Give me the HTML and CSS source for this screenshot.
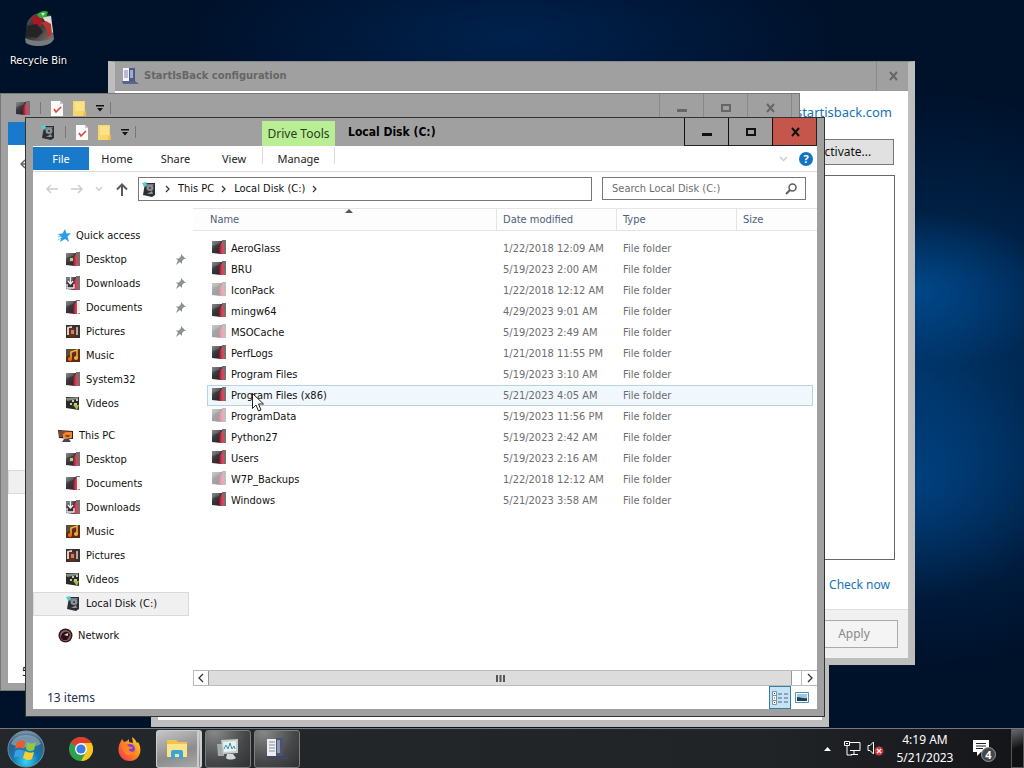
FILE: index.html
```html
<!DOCTYPE html>
<html lang="en">
<head>
<meta charset="utf-8">
<title>Local Disk (C:)</title>
<link rel="stylesheet" href="styles.css">
</head>
<body>
<svg class="defs" aria-hidden="true">
  <defs>
    <linearGradient id="gDark" x1="0" y1="0" x2="1" y2="1"><stop offset="0" stop-color="#8a8a8a"/><stop offset=".35" stop-color="#3a3a3e"/><stop offset="1" stop-color="#1b1b1f"/></linearGradient>
    <linearGradient id="gRed" x1="0" y1="0" x2="1" y2="0"><stop offset="0" stop-color="#8d1425"/><stop offset=".6" stop-color="#d8455a"/><stop offset="1" stop-color="#b05a66"/></linearGradient>
    <linearGradient id="gBin" x1="0" y1="0" x2="1" y2="1"><stop offset="0" stop-color="#6a6a6a"/><stop offset=".4" stop-color="#2a2a2a"/><stop offset="1" stop-color="#8a8a8a"/></linearGradient>
    <radialGradient id="gOrb" cx=".5" cy=".85" r=".9"><stop offset="0" stop-color="#35d6f5"/><stop offset=".4" stop-color="#1478b4"/><stop offset=".75" stop-color="#335e7c"/><stop offset="1" stop-color="#9db4c2"/></radialGradient>
    <linearGradient id="gFox" x1="1" y1="0" x2="0" y2="1"><stop offset="0" stop-color="#ffe23c"/><stop offset=".45" stop-color="#ff8a1e"/><stop offset="1" stop-color="#f02a5b"/></linearGradient>
    <symbol id="folder" viewBox="0 0 14 15">
      <path d="M0 1h13v13H9l-9-1z" fill="url(#gDark)"/>
      <path d="M10 0h4v14h-4z" fill="#77706f"/>
      <path d="M7 14V9c0-3 1-5 3-7l1 0c1 4 2 8 1 12z" fill="url(#gRed)"/>
      <path d="M0 1h9L7 4 0 6z" fill="#8a8a8a" opacity=".4"/>
    </symbol>
    <symbol id="f-desktop" viewBox="0 0 14 15"><use href="#folder" width="14" height="15"/><rect x="2" y="5" width="6" height="5" fill="#3c4a3a"/><rect x="4" y="6" width="3" height="3" fill="#c4c488"/></symbol>
    <symbol id="f-down" viewBox="0 0 14 15"><use href="#folder" width="14" height="15"/><path d="M4.500 1v6M2 5l2.500 3L7 5M1 8v4h7V8" fill="none" stroke="#e8f0f4" stroke-width="1.300"/></symbol>
    <symbol id="f-doc" viewBox="0 0 14 15"><use href="#folder" width="14" height="15"/><path d="M11 1h3v12l-3 1z" fill="#f0eeee"/></symbol>
    <symbol id="f-pic" viewBox="0 0 14 15"><rect y="1" width="14" height="13" fill="#3b302e"/><path d="M1 3l5-1v2H3v7H1z" fill="#d8d0c8"/><path d="M3 4h6v9H3z" fill="#6a2c1c"/><path d="M5 6h3v4H5z" fill="#c88458"/><path d="M10 3h2v8h-2z" fill="#afa8a4"/></symbol>
    <symbol id="f-music" viewBox="0 0 14 15"><rect y="1" width="14" height="13" fill="#5c2c18"/><path d="M0 1h14L0 9z" fill="#54503c"/><path d="M5 11V4l6-2v8" fill="none" stroke="#ffab2e" stroke-width="1.600"/><circle cx="4" cy="11" r="2" fill="#f06a1a"/><circle cx="10" cy="10" r="2" fill="#ffab2e"/></symbol>
    <symbol id="f-video" viewBox="0 0 14 15"><path d="M0 1h13v13L0 12z" fill="#2a2b26"/><path d="M0 2l12-1v2L1 5z" fill="#8b8b84"/><path d="M6 4h2v2H6zM10 3h2v2h-2zM4 7h2v2H4zM8 7h3v2H8z" fill="#c8c8b0"/><path d="M7 9h6l-2 5z" fill="#a2b94c"/></symbol>
    <symbol id="disk" viewBox="0 0 14 15"><path d="M3 1l10 0v12l-3 2-9-2z" fill="#2c3034"/><path d="M4 2l8 0-1 2-8 1z" fill="#70787c"/><ellipse cx="8" cy="6" rx="3.500" ry="3" fill="#8a9296"/><circle cx="8" cy="6" r="1" fill="#33383a"/><path d="M5 12l5-3 1 3z" fill="#8d9498"/><path d="M0 1l4-1 1 3-3 2z" fill="#53d0d4"/></symbol>
    <symbol id="pc" viewBox="0 0 16 14"><path d="M0 1l15 1v8L1 9z" fill="#2b1c18"/><path d="M1 2l8 0-3 6-5 0z" fill="#7b4a3c"/><path d="M5 5c3-3 6-2 9-2v6H5z" fill="#f0862a"/><path d="M7 6l5 0-1 2H8z" fill="#9e3c10"/><path d="M6 10h5l2 3H4z" fill="#4a4644"/></symbol>
    <symbol id="net" viewBox="0 0 15 15"><circle cx="7.500" cy="7.500" r="7" fill="#33191d"/><circle cx="7.500" cy="7.500" r="5.500" fill="#8a6268"/><path d="M3 10c0-5 3-7 7-6l2 3-3 5-4 0z" fill="#2a1014"/><path d="M6 7l4-2 0 3z" fill="#e6dcdc"/></symbol>
    <symbol id="star" viewBox="0 0 13 13"><path d="M7 0l1.500 4.500L13 4 9.500 7.500 11 13 7 10 2 13l1.500-5L0 5l4.500-.5z" fill="#2b9fe6"/><path d="M0 8l3-1M0 11l3-2" stroke="#7cc4ee"/></symbol>
    <symbol id="pin" viewBox="0 0 11 11"><path d="M6 0l5 5-2 0-2 2 0 3-2-2-4 3 2-4.500L1 4.500h3L6 2z" fill="#8b9094"/></symbol>
    <symbol id="check" viewBox="0 0 12 15"><path d="M0 0h9l3 3v12H0z" fill="#fdfafa"/><path d="M9 0l3 3H9z" fill="#c9c2c2"/><path d="M3 8l2 3 5-5" fill="none" stroke="#d8483c" stroke-width="1.600"/></symbol>
    <symbol id="newfolder" viewBox="0 0 13 15"><path d="M0 0h12v10l1 1v4H0z" fill="#f7d76c"/><path d="M2 1h9v9H2z" fill="#fbe18a"/><path d="M11 10h2v5h-3z" fill="#eebf48"/></symbol>
    <symbol id="drop" viewBox="0 0 8 7"><path d="M0 0h8v1.500H0zM1 3h6L4 6.500z" fill="#111"/></symbol>
    <symbol id="app" viewBox="0 0 17 17"><path d="M1 0h6v13H1z" fill="#f2f4fa"/><path d="M7 0h6v13H7z" fill="#4b5a88"/><path d="M8 2h3v8H8z" fill="#a2accb"/><path d="M2 3h4M2 5h4M2 7h4M2 9h4" stroke="#7a84a4"/><path d="M0 13h13l4 3H1z" fill="#5b6588"/></symbol>
    <symbol id="min" viewBox="0 0 12 12"><path d="M1 7h10v3H1z" fill="currentColor"/></symbol>
    <symbol id="max" viewBox="0 0 12 12"><path d="M2 3h8v6H2z" fill="none" stroke="currentColor" stroke-width="2"/></symbol>
    <symbol id="close" viewBox="0 0 12 12"><path d="M3 2l7 8M10 2l-7 8" fill="none" stroke="currentColor" stroke-width="2"/></symbol>
    <symbol id="chev" viewBox="0 0 6 8"><path d="M1 1l3 3-3 3" fill="none" stroke="currentColor" stroke-width="1.200"/></symbol>
    <symbol id="bigchev" viewBox="0 0 6 10"><path d="M1 1l4 4-4 4" fill="none" stroke="currentColor" stroke-width="1.300"/></symbol>
    <symbol id="down" viewBox="0 0 9 6"><path d="M1 1l3.500 3.500L8 1" fill="none" stroke="currentColor" stroke-width="1.500"/></symbol>
    <symbol id="arrow" viewBox="0 0 12 10"><path d="M12 5H1M5 1L1 5l4 4" fill="none" stroke="currentColor" stroke-width="1.500"/></symbol>
  </defs>
</svg>

<main class="desktop">
  <a class="recycle" href="#">
    <svg width="34" height="40" viewBox="0 0 34 40"><path d="M5 14C8 7 14 4 20 3l9 3 3 24c-4 8-22 9-29 3z" fill="url(#gBin)"/><path d="M9 10c4-4 9-5 12-3l-1 10-6 3z" fill="#a11c26"/><path d="M20 8l9-1 2 16-5 6c2-8-1-15-6-21z" fill="#dcdcdc"/><path d="M19 14c5 3 7 9 6 16l5-5-1-10-5-3z" fill="#b5362f"/><path d="M15 6c3-4 8-5 11-3l-2 5-6 1z" fill="#2fae3e"/><path d="M19 4l4 0-2 3z" fill="#c8f4c4"/><path d="M4 17l11-2 6 8-6 6-11-2z" fill="#242426"/><path d="M3 29c8 4 20 4 28 0l-1 4c-6 5-20 5-26 1z" fill="#777a7d"/></svg>
    <span>Recycle Bin</span>
  </a>

  <section class="window rear"></section>

  <section class="window dialog">
    <header class="titlebar">
      <svg width="17" height="17"><use href="#app"/></svg>
      <h2>StartIsBack configuration</h2>
      <button class="cap" aria-label="Close"><svg width="12" height="12"><use href="#close"/></svg></button>
    </header>
    <div class="dialog-body">
      <a class="site" href="#">startisback.com</a>
      <button class="activate">Activate...</button>
      <div class="panel"></div>
      <a class="update" href="#">Check now</a>
    </div>
    <footer><button disabled>Apply</button></footer>
  </section>

  <section class="window second">
    <header class="titlebar">
      <div class="quick">
        <svg width="14" height="15"><use href="#folder"/></svg><i></i>
        <svg width="12" height="15"><use href="#check"/></svg>
        <svg width="13" height="15"><use href="#newfolder"/></svg>
        <svg width="8" height="7"><use href="#drop"/></svg><i></i>
      </div>
      <div class="caps">
        <button class="cap" aria-label="Minimize"><svg width="12" height="12"><use href="#min"/></svg></button>
        <button class="cap" aria-label="Maximize"><svg width="12" height="12"><use href="#max"/></svg></button>
        <button class="cap" aria-label="Close"><svg width="12" height="12"><use href="#close"/></svg></button>
      </div>
    </header>
    <div class="second-body">
      <div class="second-file"></div>
      <div class="second-nav"><svg width="12" height="10"><use href="#arrow"/></svg></div>
      <div class="second-sel"></div>
      <div class="second-status">5</div>
    </div>
  </section>

  <section class="window explorer">
    <header class="titlebar">
      <div class="quick">
        <svg width="14" height="15"><use href="#disk"/></svg><i></i>
        <svg width="12" height="15"><use href="#check"/></svg>
        <svg width="13" height="15"><use href="#newfolder"/></svg>
        <svg width="8" height="7"><use href="#drop"/></svg><i></i>
      </div>
      <div class="drive-tools">Drive Tools</div>
      <h1>Local Disk (C:)</h1>
      <div class="caps">
        <button class="cap" aria-label="Minimize"><svg width="12" height="12"><use href="#min"/></svg></button>
        <button class="cap" aria-label="Maximize"><svg width="12" height="12"><use href="#max"/></svg></button>
        <button class="cap red" aria-label="Close"><svg width="12" height="12"><use href="#close"/></svg></button>
      </div>
    </header>

    <nav class="ribbon">
      <button class="file">File</button>
      <button class="tab">Home</button>
      <button class="tab share">Share</button>
      <button class="tab">View</button>
      <button class="tab manage">Manage</button>
      <span class="ribbon-end">
        <svg class="pale" width="9" height="6"><use href="#down"/></svg>
        <button class="help" aria-label="Help">?</button>
      </span>
    </nav>

    <div class="address-row">
      <div class="history">
        <svg class="pale" width="12" height="10"><use href="#arrow"/></svg>
        <svg class="pale flip" width="12" height="10"><use href="#arrow"/></svg>
        <svg class="pale recent" width="8" height="6"><use href="#down"/></svg>
        <svg width="12" height="13" viewBox="0 0 12 13"><path d="M6 13V2M1 6.500L6 1.500l5 5" fill="none" stroke="#5a5a5a" stroke-width="2"/></svg>
      </div>
      <div class="crumbs">
        <svg width="14" height="15"><use href="#disk"/></svg>
        <svg width="6" height="8"><use href="#chev"/></svg><a href="#">This PC</a>
        <svg width="6" height="8"><use href="#chev"/></svg><a href="#">Local Disk (C:)</a>
        <svg width="6" height="8"><use href="#chev"/></svg>
      </div>
      <label class="search">
        <input type="text" placeholder="Search Local Disk (C:)" aria-label="Search Local Disk (C:)">
        <svg width="12" height="12" viewBox="0 0 12 12"><circle cx="7.500" cy="4.500" r="3.500" fill="none" stroke="#5e5e5e" stroke-width="1.500"/><path d="M5 7l-4 4" stroke="#5e5e5e" stroke-width="2"/></svg>
      </label>
    </div>

    <div class="content">
      <nav class="tree">
        <a class="root" href="#"><svg width="13" height="13"><use href="#star"/></svg>Quick access</a>
        <a href="#"><svg width="14" height="15"><use href="#f-desktop"/></svg>Desktop<svg class="pin" width="11" height="11"><use href="#pin"/></svg></a>
        <a href="#"><svg width="14" height="15"><use href="#f-down"/></svg>Downloads<svg class="pin" width="11" height="11"><use href="#pin"/></svg></a>
        <a href="#"><svg width="14" height="15"><use href="#f-doc"/></svg>Documents<svg class="pin" width="11" height="11"><use href="#pin"/></svg></a>
        <a href="#"><svg width="14" height="15"><use href="#f-pic"/></svg>Pictures<svg class="pin" width="11" height="11"><use href="#pin"/></svg></a>
        <a href="#"><svg width="14" height="15"><use href="#f-music"/></svg>Music</a>
        <a href="#"><svg width="14" height="15"><use href="#folder"/></svg>System32</a>
        <a href="#"><svg width="14" height="15"><use href="#f-video"/></svg>Videos</a>
        <a class="root group" href="#"><svg width="16" height="14"><use href="#pc"/></svg>This PC</a>
        <a href="#"><svg width="14" height="15"><use href="#f-desktop"/></svg>Desktop</a>
        <a href="#"><svg width="14" height="15"><use href="#f-doc"/></svg>Documents</a>
        <a href="#"><svg width="14" height="15"><use href="#f-down"/></svg>Downloads</a>
        <a href="#"><svg width="14" height="15"><use href="#f-music"/></svg>Music</a>
        <a href="#"><svg width="14" height="15"><use href="#f-pic"/></svg>Pictures</a>
        <a href="#"><svg width="14" height="15"><use href="#f-video"/></svg>Videos</a>
        <a class="selected" href="#"><svg width="14" height="15"><use href="#disk"/></svg>Local Disk (C:)</a>
        <a class="root group" href="#"><svg width="15" height="15"><use href="#net"/></svg>Network</a>
      </nav>

      <div class="files">
        <table>
          <colgroup><col class="c-edge"><col class="c-name"><col class="c-date"><col class="c-type"><col><col class="c-tail"></colgroup>
          <thead><tr><th colspan="2" class="sorted">Name</th><th>Date modified</th><th>Type</th><th colspan="2">Size</th></tr></thead>
          <tbody>
            <tr class="gap"><td colspan="6"></td></tr>
            <tr><td></td><td><svg width="14" height="15"><use href="#folder"/></svg>AeroGlass</td><td>1/22/2018 12:09 AM</td><td>File folder</td><td></td><td></td></tr>
            <tr><td></td><td><svg width="14" height="15"><use href="#folder"/></svg>BRU</td><td>5/19/2023 2:00 AM</td><td>File folder</td><td></td><td></td></tr>
            <tr class="hidden"><td></td><td><svg width="14" height="15"><use href="#folder"/></svg>IconPack</td><td>1/22/2018 12:12 AM</td><td>File folder</td><td></td><td></td></tr>
            <tr><td></td><td><svg width="14" height="15"><use href="#folder"/></svg>mingw64</td><td>4/29/2023 9:01 AM</td><td>File folder</td><td></td><td></td></tr>
            <tr class="hidden"><td></td><td><svg width="14" height="15"><use href="#folder"/></svg>MSOCache</td><td>5/19/2023 2:49 AM</td><td>File folder</td><td></td><td></td></tr>
            <tr><td></td><td><svg width="14" height="15"><use href="#folder"/></svg>PerfLogs</td><td>1/21/2018 11:55 PM</td><td>File folder</td><td></td><td></td></tr>
            <tr><td></td><td><svg width="14" height="15"><use href="#folder"/></svg>Program Files</td><td>5/19/2023 3:10 AM</td><td>File folder</td><td></td><td></td></tr>
            <tr class="hover"><td></td><td><svg width="14" height="15"><use href="#folder"/></svg>Program Files (x86)</td><td>5/21/2023 4:05 AM</td><td>File folder</td><td></td><td></td></tr>
            <tr class="hidden"><td></td><td><svg width="14" height="15"><use href="#folder"/></svg>ProgramData</td><td>5/19/2023 11:56 PM</td><td>File folder</td><td></td><td></td></tr>
            <tr><td></td><td><svg width="14" height="15"><use href="#folder"/></svg>Python27</td><td>5/19/2023 2:42 AM</td><td>File folder</td><td></td><td></td></tr>
            <tr><td></td><td><svg width="14" height="15"><use href="#folder"/></svg>Users</td><td>5/19/2023 2:16 AM</td><td>File folder</td><td></td><td></td></tr>
            <tr class="hidden"><td></td><td><svg width="14" height="15"><use href="#folder"/></svg>W7P_Backups</td><td>1/22/2018 12:12 AM</td><td>File folder</td><td></td><td></td></tr>
            <tr><td></td><td><svg width="14" height="15"><use href="#folder"/></svg>Windows</td><td>5/21/2023 3:58 AM</td><td>File folder</td><td></td><td></td></tr>
          </tbody>
        </table>
        <div class="scroll">
          <button aria-label="Scroll left"><svg class="flip" width="6" height="10"><use href="#bigchev"/></svg></button>
          <div class="thumb"><svg width="9" height="7" viewBox="0 0 9 7"><path d="M1 0v7M4.500 0v7M8 0v7" stroke="#555" stroke-width="2"/></svg></div>
          <button aria-label="Scroll right"><svg width="6" height="10"><use href="#bigchev"/></svg></button>
        </div>
      </div>
    </div>

    <footer class="status">
      <span>13 items</span>
      <button class="view on" aria-label="Details"><svg width="16" height="14" viewBox="0 0 16 14"><path d="M.5.500h4v13h-4zM.5 4.500h4M.5 9.500h4" fill="#fff" stroke="#7a94a4"/><path d="M2 2.500h1M2 7h1M2 11.500h1" stroke="#444"/><path d="M6 3h4M12 3h4M6 7h4M12 7h4M6 11h4M12 11h4" stroke="#4a6274"/></svg></button>
      <button class="view" aria-label="Large icons"><svg width="14" height="11" viewBox="0 0 14 11"><path d="M.5.500h13v10H.5z" fill="#fff" stroke="#4c93cc"/><path d="M2 2h10v7H2z" fill="#9fc6e4"/><path d="M2 5c4 0 6 2 10 1v3H2z" fill="#1f4450"/></svg></button>
    </footer>
  </section>

  <svg class="cursor" width="12" height="19" viewBox="0 0 12 19"><path d="M.5.500v15l3.500-3.500 2.500 6 2.500-1-2.500-6h5z" fill="#fff" stroke="#222"/></svg>
</main>

<footer class="taskbar">
  <button class="start" aria-label="Start"><svg width="38" height="38" viewBox="0 0 38 38"><circle cx="19" cy="19" r="18" fill="url(#gOrb)" stroke="#6e8fa3"/><path d="M4 14C8 2 30 2 34 14c-8 5-22 4-30 0z" fill="#fff" opacity=".32"/><path d="M10 12c3-2 6-2 8 0l-1 7c-3-2-6-2-9 0z" fill="#ee5a28"/><path d="M20 12c3 2 6 2 9 0l-2 8c-3 2-6 1-8-1z" fill="#93c83e"/><path d="M8 21c3-2 6-2 9 0l-2 7c-2-2-5-2-8 0z" fill="#3b9fe4"/><path d="M18 21c3 2 6 2 9 1l-2 7c-3 2-6 1-9-1z" fill="#fccf2e"/></svg></button>
  <button class="launch" aria-label="Chrome"><svg width="24" height="24" viewBox="0 0 24 24"><circle cx="12" cy="12" r="12" fill="#2da24c"/><path d="M12 12L1.600 6A12 12 0 0 1 22.400 6z" fill="#e33b2e"/><path d="M12 6h10.400A12 12 0 0 1 12 24l5-9z" fill="#fcc31e"/><path d="M1.600 6l5.200 9L12 12z" fill="#2da24c"/><circle cx="12" cy="12" r="6" fill="#fff"/><circle cx="12" cy="12" r="4.600" fill="#3b7de8"/></svg></button>
  <button class="launch" aria-label="Firefox"><svg width="24" height="24" viewBox="0 0 24 24"><path d="M2 6l2-4 2 3 3-1 2-2v3l4 1-1-6c3 2 4 4 5 6l1-1c5 7 2 19-8 19C2 24-2 14 2 6z" fill="url(#gFox)"/><circle cx="12" cy="12" r="5" fill="#7a42d6"/><path d="M4 9c3-2 6-1 8 1l3 0c-1 2-3 2-4 2 0 3 4 4 6 1-1 6-8 7-11 2z" fill="#ff8226"/></svg></button>
  <button class="task stack" aria-label="File Explorer"><svg width="24" height="22" viewBox="0 0 24 22"><path d="M2 2h9l2 2h9v15H2z" fill="#f0c44a"/><path d="M2 6h20v13H2z" fill="#fbe389"/><path d="M6 21v-7q0-2 2-2h8q2 0 2 2v7h-4v-5h-4v5z" fill="#38a5dd"/></svg></button>
  <button class="task" aria-label="Task Manager"><svg width="24" height="24" viewBox="0 0 24 24"><path d="M1 7h7v12H2z" fill="#a4aba8"/><path d="M5 3l17-1v14l-15 1z" fill="#c5cdca"/><path d="M7 5l13-1v10L8 15z" fill="#e6f2f2"/><path d="M8 12l2-4 2 4 2-6 2 6 2-3 1 3" fill="none" stroke="#3f93a8"/><path d="M11 17h6l3 4c-3 2-8 2-10 0z" fill="#d4d8d6"/></svg></button>
  <button class="task" aria-label="StartIsBack"><svg width="26" height="24" viewBox="0 0 26 24"><path d="M3 2h9v17H3z" fill="#eceef2"/><path d="M12 1h7v18h-7z" fill="#4d526e"/><path d="M13 3h3v13h-3z" fill="#8f96b2"/><path d="M5 5h6M5 8h6M5 11h6M5 14h6" stroke="#888ea2"/><path d="M2 19h22l1 3H3z" fill="#41465e"/></svg></button>

  <div class="tray">
    <svg width="7" height="4" viewBox="0 0 7 4"><path d="M0 4l3.500-4L7 4z" fill="#fff"/></svg>
    <svg class="lan" width="17" height="15" viewBox="0 0 17 15"><path d="M6 1.500h10v8H6M3 5v9h5M10 10v3M7 13.500h7M.5.500h5v4h-5z" fill="none" stroke="#fff"/><path d="M2 2.500h2" stroke="#fff"/></svg>
    <svg class="vol" width="17" height="15" viewBox="0 0 17 15"><path d="M1 4.500h2L6.500 1v12L3 9.500H1z" fill="none" stroke="#fff"/><circle cx="12" cy="10" r="4.500" fill="#d23640"/><path d="M10 8l4 4M14 8l-4 4" stroke="#fff" stroke-width="1.300"/></svg>
    <div class="clock"><span>4:19 AM</span><span>5/21/2023</span></div>
    <button class="notify" aria-label="Notifications"><svg width="17" height="17" viewBox="0 0 17 17"><path d="M0 0h16v12H8l-4 4v-4H0z" fill="#fff"/><path d="M3 3.500h10M3 6h10M3 8.500h7" stroke="#222"/></svg><b>4</b></button>
  </div>
  <button class="peek" aria-label="Show desktop"></button>
</footer>
</body>
</html>
```
FILE: styles.css
```css
* { box-sizing: border-box; }
body {
  margin: 0;
  height: 100vh;
  display: flex;
  flex-direction: column;
  overflow: hidden;
  font: 12px/16px "Noto Sans", sans-serif;
  color: #111;
}
button, input { font: inherit; color: inherit; border: 0; padding: 0; margin: 0; background: none; }
a { color: inherit; text-decoration: none; }
svg { display: block; flex: none; }
h1, h2 { margin: 0; font: bold 12px/16px "DejaVu Sans Condensed", sans-serif; }
.defs { position: absolute; width: 0; height: 0; }
.pale { color: #ccc; }
.flip { transform: scaleX(-1); }

.desktop {
  flex: 1;
  position: relative;
  background:
    radial-gradient(ellipse 150px 80px at 89% 40%, rgba(0, 88, 168, .65), transparent),
    radial-gradient(ellipse 170px 120px at 88% 66%, rgba(0, 80, 155, .65), transparent),
    radial-gradient(ellipse 320px 290px at 90% 52%, rgba(0, 62, 120, .8), transparent),
    radial-gradient(ellipse 330px 90px at 50% 5%, rgba(0, 38, 86, .8), transparent),
    #00112a;
}
.recycle {
  position: absolute; left: 0; top: 9px; width: 77px;
  display: flex; flex-direction: column; align-items: center; gap: 4px;
  font: 11px/16px "DejaVu Sans Condensed", sans-serif;
  color: #fff; text-shadow: 1px 1px 1px #000;
}

/* Windows */
.window { position: absolute; display: flex; flex-direction: column; }
.titlebar { display: flex; align-items: center; background: #a0a0a0; }
.caps { display: flex; align-self: stretch; margin-left: auto; }
.cap {
  display: flex; align-items: center; justify-content: center; align-self: stretch;
  width: 44px; border-left: 1px solid currentColor;
}
.quick { display: flex; align-items: center; gap: 10px; padding-left: 8px; flex: 0 0 229px; }
.quick i { width: 1px; height: 12px; background: #777; }
.quick i:last-child { margin-left: -4px; }

.rear { left: 151px; top: 300px; right: 195px; bottom: 1px; background: #fff; border: 7px solid #bebebe; }

.dialog { left: 108px; top: 61px; right: 109px; bottom: 63px; border: 7px solid #bebebe; border-top: 1px solid #888; background: #fff; }
.dialog .titlebar { height: 29px; padding-left: 7px; gap: 5px; color: #666; border-bottom: 1px solid #999; }
.dialog h2 { flex: 1; font-size: 11px; }
.dialog .cap { width: 32px; border-color: #888; }
.dialog-body { flex: 1; display: flex; flex-direction: column; align-items: flex-end; padding: 13px 13px 16px 24px; }
.site, .update { color: #1673b8; margin-right: 3px; }
.site { font-size: 13px; }
.activate { width: 100px; height: 26px; margin: 19px 1px 10px 0; border: 1px solid #777; background: #e1e1e1; }
.panel { flex: 1; width: 100%; border: 1px solid #666; margin-bottom: 17px; }
.update { margin-right: 5px; }
.dialog footer { height: 49px; padding: 10px; text-align: right; background: #f0f0f0; border-top: 1px solid #ddd; }
.dialog footer button { width: 88px; height: 28px; border: 1px solid #aaa; color: #888; background: #f4f4f4; }

.second { left: 0; top: 93px; right: 224px; bottom: 37px; background: #a0a0a0; border: 1px solid #777; padding: 0 7px 7px; }
.second .titlebar { height: 28px; color: #707070; }
.second .caps { border-right: 1px solid #888; }
.second .cap { border-color: #888; color: #666; }
.second-body { flex: 1; background: #fff; display: flex; flex-direction: column; }
.second-file { width: 56px; height: 23px; background: #1979ca; }
.second-nav { padding: 14px 12px; color: #666; }
.second-sel { width: 156px; height: 24px; margin-top: 287px; background: #f0f0f0; border: 1px solid #d9d9d9; }
.second-status { margin-top: auto; padding: 0 14px 3px; }

.explorer { left: 25px; top: 117px; right: 199px; bottom: 11px; background: #a0a0a0; border: 1px solid #333; padding: 0 7px 7px; }
.explorer .titlebar { height: 28px; }
.explorer .titlebar .cap { border-bottom: 1px solid #222; }
.explorer .titlebar .cap.red { background: #c5564c; border-right: 1px solid #222; width: 45px; }
.drive-tools { align-self: flex-end; width: 73px; height: 25px; line-height: 25px; text-align: center; background: #b9ee94; color: #27401c; }
.explorer h1 { margin-left: 13px; color: #000; }

.ribbon { display: flex; background: #fff; border-bottom: 1px solid #dadbdc; padding-top: 1px; height: 26px; font-size: 11px; }
.file { width: 56px; height: 23px; background: #1979ca; color: #fff; }
.tab { width: 56px; height: 23px; color: #222; }
.share { width: 61px; }
.ribbon .manage { width: 73px; height: 17px; margin-bottom: 6px; padding-top: 6px; line-height: 11px; border: solid #dadbdc; border-width: 0 1px; }
.ribbon-end { margin-left: auto; display: flex; align-items: center; gap: 11px; padding-right: 4px; }
.help { width: 14px; height: 14px; border-radius: 50%; background: #1474c4; color: #fff; font-weight: bold; line-height: 14px; }

.address-row { display: flex; background: #fff; padding: 5px 11px 7px 13px; gap: 10px; font: 11px/14px "DejaVu Sans Condensed", sans-serif; }
.history { display: flex; align-items: center; justify-content: space-between; flex: 0 0 82px; }
.crumbs { flex: 1; display: flex; align-items: center; gap: 7px; height: 24px; padding-left: 3px; border: 1px solid #777; color: #333; }
.crumbs a { color: #111; }
.crumbs svg:first-child { margin-right: 2px; }
.search { display: flex; align-items: center; flex: 0 0 204px; height: 23px; border: 1px solid #777; padding: 0 8px 0 9px; }
.search input { flex: 1; min-width: 0; outline: 0; }
.search input::placeholder { color: #6d6d6d; opacity: 1; }

.content { flex: 1; min-height: 0; display: flex; background: #fff; font: 11px/14px "DejaVu Sans Condensed", sans-serif; }
.tree { flex: 0 0 156px; padding-top: 16px; }
.tree a { display: flex; align-items: center; gap: 6px; height: 24px; padding: 0 2px 0 32px; border: 1px solid transparent; }
.tree a.root { padding-left: 24px; gap: 5px; }
.tree a.group { margin-top: 8px; }
.tree a.selected { background: #f0f0f0; border-color: #d9d9d9; }
.tree svg { margin-bottom: 1px; }
.tree .pin { margin-left: auto; }
.files { flex: 1; min-width: 0; margin-left: 4px; display: flex; flex-direction: column; }

table { width: 100%; table-layout: fixed; border-collapse: separate; border-spacing: 0; }
.c-edge { width: 14px; }
.c-name { width: 290px; }
.c-date, .c-type { width: 120px; }
.c-tail { width: 4px; }
th { position: relative; height: 23px; padding: 0 0 0 6px; text-align: left; font-weight: normal; color: #4c607a; background: #fdfdfd; border: solid #e5e5e5; border-width: 1px 1px 1px 0; }
th.sorted { padding-left: 17px; }
th:last-child { border-right: 0; }
.sorted::after { content: ""; position: absolute; top: 0; left: 50%; border: solid transparent; border-width: 0 4px 4px; border-bottom-color: #555; }
td { height: 21px; padding: 0 0 0 6px; color: #6d6d6d; }
td:first-child { padding: 0; }
td:last-child { padding: 0; }
td:nth-child(2) { display: flex; align-items: center; gap: 5px; padding-left: 5px; color: #111; }
td:nth-child(2) svg { margin-bottom: 3px; }
.gap td { height: 7px; }
.hidden svg { opacity: .45; }
.hover td:nth-child(n+2):nth-child(-n+5) { background: #f1f8fd; border: solid #b8d4e4; border-width: 1px 0; }
.hover td:nth-child(2) { border-left-width: 1px !important; padding-left: 4px; }
.hover td:nth-child(5) { border-right-width: 1px !important; }

.scroll { margin-top: auto; display: flex; height: 16px; border: 1px solid #bbb; border-right: 0; }
.scroll button { width: 14px; display: flex; align-items: center; justify-content: center; color: #333; }
.scroll button:last-child { width: 16px; margin-left: 9px; border-left: 1px solid #bbb; }
.thumb { flex: 1; display: flex; align-items: center; justify-content: center; background: #dcdcdc; border: solid #999; border-width: 0 1px; }

.status { display: flex; align-items: center; height: 23px; background: #fff; padding: 0 4px 0 14px; color: #1e3250; flex: none; }
.status span { flex: 1; }
.view { width: 22px; height: 23px; display: flex; align-items: center; justify-content: center; }
.view.on { background: #c4e4f6; border: 1px solid #3a7ba4; }
.cursor { position: absolute; left: 252px; top: 393px; }

/* Taskbar */
.taskbar { flex: none; height: 40px; display: flex; align-items: center; padding-left: 7px; background: linear-gradient(90deg, #25282b, #212427 75%, #141518); border-top: 1px solid #75797c; color: #fff; }
.launch { margin-left: 25px; }
.start + .launch { margin-left: 24px; }
.task {
  width: 46px; height: 38px; margin-right: 3px;
  display: flex; align-items: center; justify-content: center;
  border: 1px solid #7d7f80; border-radius: 3px;
  background: radial-gradient(circle at 20% 0, #88898a, #46484a 60%, #2e3032);
}
.stack { margin-left: 14px; border-color: #ccc; border-right: 5px double #ccc; background: linear-gradient(160deg, #c6c6c6, #8c8c8c 60%, #a8a8a8); }
.tray { margin-left: auto; display: flex; align-items: center; }
.lan { margin-left: 13px; }
.vol { margin-left: 6px; }
.clock { display: flex; flex-direction: column; align-items: center; line-height: 18px; width: 60px; margin-left: 11px; }
.notify { position: relative; margin: 0 14px 0 18px; width: 24px; height: 20px; }
.notify b { position: absolute; left: 8px; top: 8px; width: 15px; height: 15px; border: 1px solid #999; border-radius: 50%; background: #44474a; font-size: 11px; line-height: 13px; }
.peek { width: 13px; height: 39px; border: 1px solid #55585a; background: linear-gradient(160deg, #66696b, #111 50%); }
```
